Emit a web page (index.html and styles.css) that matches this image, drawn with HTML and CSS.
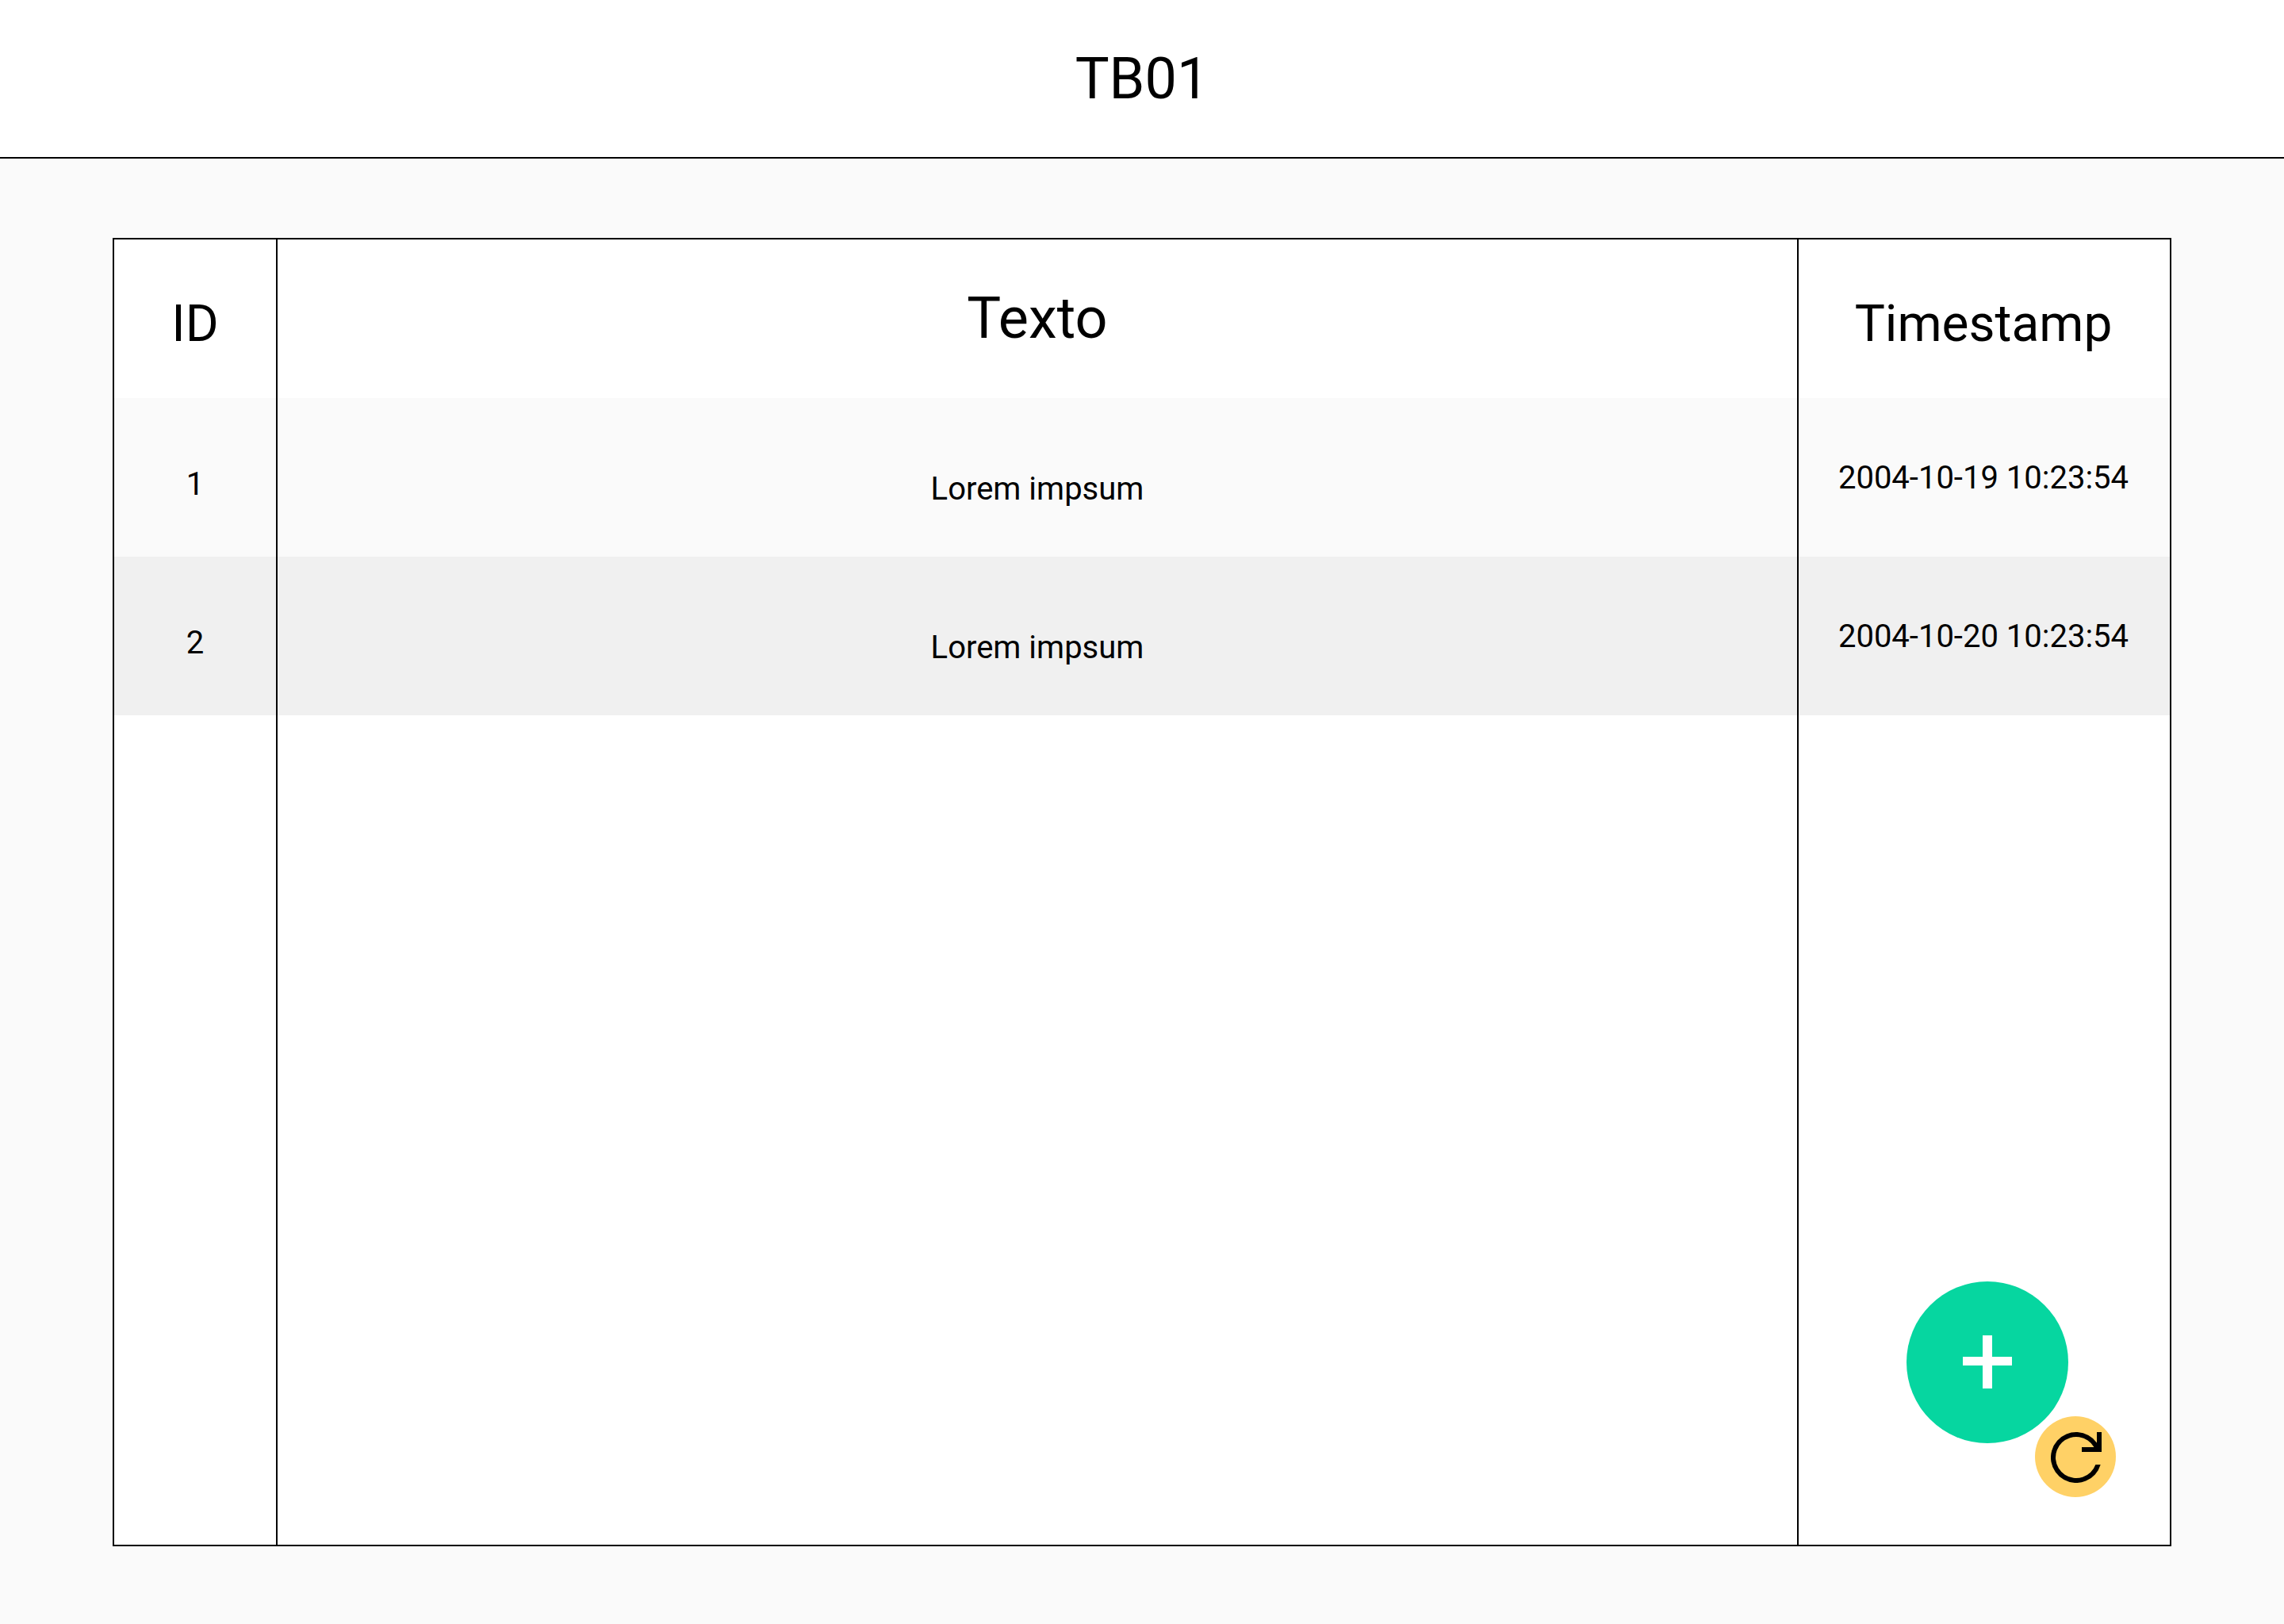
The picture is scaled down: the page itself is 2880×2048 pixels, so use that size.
FILE: index.html
```html
<!DOCTYPE html>
<html lang="es">
<head>
  <meta charset="utf-8">
  <meta name="viewport" content="width=device-width, initial-scale=1">
  <title>TB01</title>
  <link rel="stylesheet" href="styles.css">
</head>
<body class="page">
  <header class="page-header">
    <h1 class="page-title">TB01</h1>
  </header>
  <main class="content">
    <section class="panel">
      <table class="records">
        <thead>
          <tr class="row">
            <th class="col-id" scope="col">ID</th>
            <th class="col-text" scope="col">Texto</th>
            <th class="col-time" scope="col">Timestamp</th>
          </tr>
        </thead>
        <tbody>
          <tr class="row row-light">
            <td class="col-id">1</td>
            <td class="col-text">Lorem impsum</td>
            <td class="col-time">2004-10-19 10:23:54</td>
          </tr>
          <tr class="row row-dark">
            <td class="col-id">2</td>
            <td class="col-text">Lorem impsum</td>
            <td class="col-time">2004-10-20 10:23:54</td>
          </tr>
          <tr class="row-fill" aria-hidden="true">
            <td class="col-id"></td>
            <td class="col-text"></td>
            <td class="col-time"></td>
          </tr>
        </tbody>
      </table>
      <div class="actions">
        <button class="action action-add" type="button" aria-label="Añadir">
          <svg class="icon-add" viewBox="0 0 62 67" aria-hidden="true">
            <path d="M25 0H37V27H62V38H37V67H25V38H0V27H25Z" fill="currentColor"/>
          </svg>
        </button>
        <button class="action action-refresh" type="button" aria-label="Actualizar">
          <svg class="icon-refresh" viewBox="0 0 64 64" aria-hidden="true">
            <path d="M62.7 41A32 32 0 1 1 58 13.4V0H64V25H39V19H54.5A26 26 0 1 0 56.4 41Z" fill="currentColor"/>
          </svg>
        </button>
      </div>
    </section>
  </main>
</body>
</html>
```
FILE: styles.css
```css
*,
*::before,
*::after {
  box-sizing: border-box;
}

.page {
  display: flex;
  flex-direction: column;
  min-height: 100vh;
  margin: 0;
  background: #fafafa;
  color: #000;
  font-family: Roboto, "Liberation Sans", sans-serif;
}

.page-header {
  padding: 58px 48px 56px;
  border-bottom: 2px solid #000;
  background: #fff;
  text-align: center;
}

.page-title {
  margin: 0;
  font-size: 72px;
  font-weight: 400;
  line-height: 84px;
}

.content {
  display: flex;
  flex: 1;
  padding: 100px 142px 98px;
}

.panel {
  position: relative;
  display: grid;
  flex: 1;
  border: 2px solid #000;
  background: #fff;
}

/* Records table */
.records {
  width: 100%;
  height: 100%;
  border-spacing: 0;
  table-layout: fixed;
  font-size: 40px;
  line-height: 48px;
  text-align: center;
}

.records th,
.records td {
  padding: 0;
  vertical-align: middle;
}

.records th {
  font-size: 64px;
  font-weight: 400;
  line-height: 76px;
}

.records th.col-text {
  font-size: 72px;
  line-height: 84px;
}

.row {
  height: 200px;
}

.row-light {
  background: #fafafa;
}

.row-dark {
  background: #f0f0f0;
}

.col-id {
  width: 206px;
  border-right: 2px solid #000;
}

.col-time {
  width: 470px;
  border-left: 2px solid #000;
}

.records th.col-id,
.records th.col-time {
  padding-top: 14px;
}

.records .row td.col-id {
  padding-top: 18px;
}

.records .row td.col-text {
  padding-top: 30px;
}

.records .row td.col-time {
  padding-top: 2px;
}

.records .col-time {
  padding-right: 2px;
}

/* Floating buttons over the table */
.actions {
  position: absolute;
  right: 68px;
  bottom: 60px;
  display: flex;
  flex-direction: column;
  width: 264px;
}

.action {
  display: flex;
  align-items: center;
  justify-content: center;
  padding: 0;
  border: 0;
  border-radius: 50%;
  cursor: pointer;
}

.action-add {
  width: 204px;
  height: 204px;
  padding-bottom: 2px;
  background: #06d6a0;
  color: #fff;
}

.action-refresh {
  align-self: flex-end;
  width: 102px;
  height: 102px;
  margin-top: -34px;
  padding: 2px 0 0 2px;
  background: #ffd166;
  color: #000;
}

.icon-add {
  width: 62px;
  height: 67px;
}

.icon-refresh {
  width: 64px;
  height: 64px;
}
```
